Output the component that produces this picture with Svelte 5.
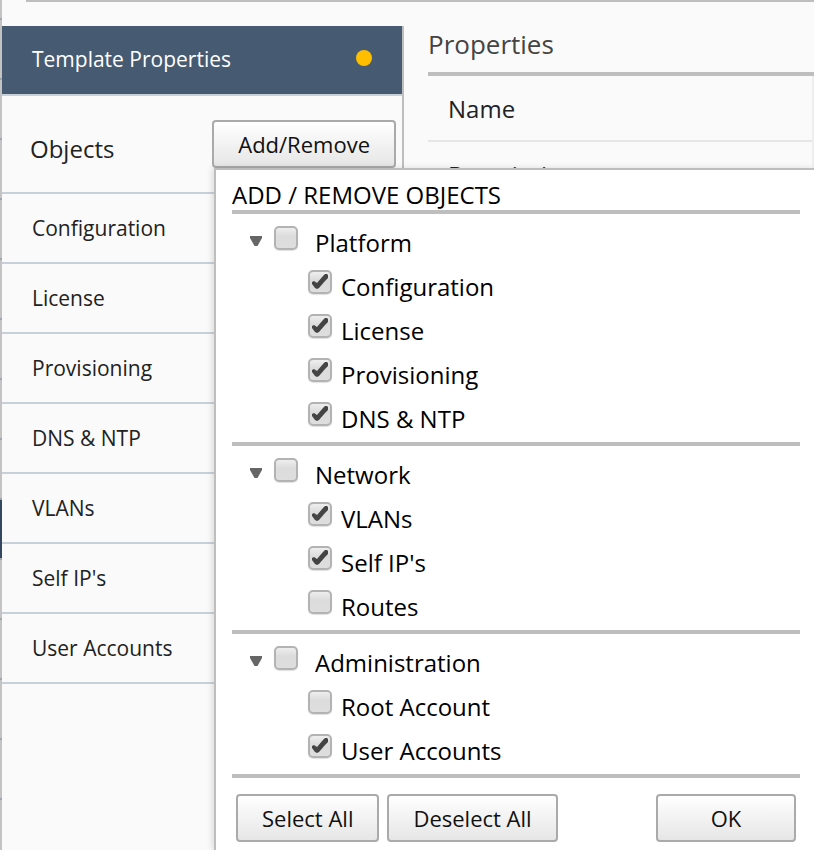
<script>
  let objects = ['Configuration', 'License', 'Provisioning', 'DNS & NTP', 'VLANs', "Self IP's", 'User Accounts'];

  let groups = $state([
    {
      name: 'Platform', open: true, checked: false,
      items: [
        { name: 'Configuration', checked: true },
        { name: 'License', checked: true },
        { name: 'Provisioning', checked: true },
        { name: 'DNS & NTP', checked: true }
      ]
    },
    {
      name: 'Network', open: true, checked: false,
      items: [
        { name: 'VLANs', checked: true },
        { name: "Self IP's", checked: true },
        { name: 'Routes', checked: false }
      ]
    },
    {
      name: 'Administration', open: true, checked: false,
      items: [
        { name: 'Root Account', checked: false },
        { name: 'User Accounts', checked: true }
      ]
    }
  ]);

  let popupOpen = $state(true);

  function setAll(value) {
    for (const group of groups) {
      for (const item of group.items) item.checked = value;
    }
  }
</script>

{#snippet tick(entry)}
  <span class="box">
    <input type="checkbox" bind:checked={entry.checked} />
    {#if entry.checked}
      <svg viewBox="0 0 24 24" aria-hidden="true">
        <path d="M4 12 L6 11 L9 13 L15 6 L17 4 H19 L20 5 V8 L17 11 L11 18 L9 19 L7 18 L4 14 Z" fill="#444" />
      </svg>
    {/if}
  </span>
{/snippet}

<div class="page">
  <div class="edge"><div class="marker"></div></div>
  <div class="content">
    <div class="topline"></div>
    <div class="columns">
      <nav class="sidebar">
        <a class="current" href="#template">Template Properties <span class="dot"></span></a>
        <div class="objects">
          <h2>Objects</h2>
          <button class="btn" type="button" onclick={() => (popupOpen = !popupOpen)}>Add/Remove</button>
        </div>
        {#each objects as name}
          <a class="entry" href="#object">{name}</a>
        {/each}
      </nav>
      <main class="details">
        <h2>Properties</h2>
        <div class="fields">
          <div class="field">Name</div>
          <div class="field">Description</div>
        </div>
      </main>
    </div>
  </div>

  {#if popupOpen}
    <section class="popup">
      <h3>ADD / REMOVE OBJECTS</h3>
      {#each groups as group}
        <div class="group">
          <div class="row">
            <button class="toggle" type="button" aria-label="Toggle {group.name}" onclick={() => (group.open = !group.open)}>
              <svg width="12" height="10" viewBox="0 0 12 10" class:closed={!group.open}>
                <path d="M0 0 H12 V2 L7.5 10 H4.5 L0 2 Z" fill="#666" />
              </svg>
            </button>
            <label class="parent">{@render tick(group)}{group.name}</label>
          </div>
          {#if group.open}
            {#each group.items as item}
              <div class="row child">
                <label>{@render tick(item)}{item.name}</label>
              </div>
            {/each}
          {/if}
        </div>
      {/each}
      <div class="actions">
        <button class="btn" type="button" onclick={() => setAll(true)}>Select All</button>
        <button class="btn" type="button" onclick={() => setAll(false)}>Deselect All</button>
        <button class="btn ok" type="button" onclick={() => (popupOpen = false)}>OK</button>
      </div>
    </section>
  {/if}
</div>

<style>
  .page, .page * { box-sizing: border-box; }
  .page {
    position: relative;
    display: flex;
    min-height: 100vh;
    background: #fafafa;
    font-family: "Open Sans", "Noto Sans", sans-serif;
    font-size: 24px;
    color: #222;
  }
  h2, h3 { margin: 0; font-weight: 400; }
  a { text-decoration: none; }

  .edge {
    width: 2px;
    padding-top: 500px;
    background: repeating-linear-gradient(#c3c3c3 0 18px, #9fa6ac 18px 20px, #c3c3c3 20px 60px);
  }
  .marker { height: 58px; background: #33475f; }

  .content { flex: 1; display: flex; flex-direction: column; min-width: 0; }
  .topline { height: 2px; margin-left: 24px; background: #bebebe; }
  .columns { flex: 1; display: flex; padding-top: 24px; }

  .sidebar { width: 402px; flex: none; border-right: 2px solid #bebebe; font-size: 21px; }
  .current {
    display: flex;
    align-items: center;
    justify-content: space-between;
    height: 70px;
    padding: 0 30px 2px;
    background: #465b72;
    border-bottom: 2px solid #c8d1d9;
    color: #fff;
  }
  .dot { width: 16px; height: 16px; margin-bottom: 2px; border-radius: 50%; background: #ffbf00; }
  .objects {
    display: flex;
    align-items: center;
    justify-content: space-between;
    height: 98px;
    padding: 0 6px 0 28px;
    border-bottom: 2px solid #c8d1d9;
  }
  .objects h2 { font-size: 24px; padding-top: 8px; }
  .entry {
    display: block;
    height: 70px;
    line-height: 68px;
    padding-left: 30px;
    border-bottom: 2px solid #c8d1d9;
    color: #222;
  }

  .details { flex: 1; padding-left: 24px; min-width: 0; }
  .details h2 {
    height: 50px;
    line-height: 36px;
    border-bottom: 4px solid #bebebe;
    font-size: 26px;
    color: #444;
  }
  .fields { border-right: 2px solid #eee; }
  .field { height: 66px; line-height: 66px; padding-left: 20px; border-bottom: 2px solid #e6e6e6; }

  .btn {
    height: 48px;
    padding: 0 24px;
    border: 2px solid #aaa;
    border-radius: 4px;
    background: linear-gradient(#fff, #e6e6e6);
    font: inherit;
    font-size: 22px;
    color: #111;
    white-space: nowrap;
  }

  .popup {
    position: absolute;
    top: 168px;
    left: 214px;
    right: 0;
    min-height: calc(100% - 168px);
    padding: 0 14px 8px 16px;
    border: solid #bebebe;
    border-width: 2px 0 0 2px;
    background: #fff;
    box-shadow: -2px 0 6px rgba(0, 0, 0, 0.12);
    color: #000;
  }
  .popup h3 {
    height: 44px;
    line-height: 50px;
    border-bottom: 4px solid #bebebe;
    font-size: 24px;
  }
  .group { padding: 6px 0 2px; border-bottom: 4px solid #bebebe; }
  .row { display: flex; height: 44px; line-height: 46px; padding-left: 18px; }
  .child { padding-left: 76px; }
  label { display: flex; gap: 9px; }
  label.parent { gap: 17px; }
  .toggle {
    width: 24px;
    height: 42px;
    padding: 0;
    border: 0;
    background: none;
    display: flex;
    align-items: center;
  }
  .toggle .closed { transform: rotate(-90deg); }
  .box { display: grid; width: 24px; height: 24px; margin-top: 6px; }
  .box input, .box svg { grid-area: 1 / 1; width: 24px; height: 24px; margin: 0; }
  .box svg { position: relative; pointer-events: none; }
  .box input {
    appearance: none;
    border: 2px solid #b3b3b3;
    border-radius: 5px;
    background: linear-gradient(#eee, #dcdcdc 40%, #dedede);
    box-shadow: 0 1px 1px #e2e2e2;
  }
  .actions { display: flex; gap: 8px; padding: 16px 4px 0; }
  .ok { min-width: 140px; margin-left: auto; }
</style>
